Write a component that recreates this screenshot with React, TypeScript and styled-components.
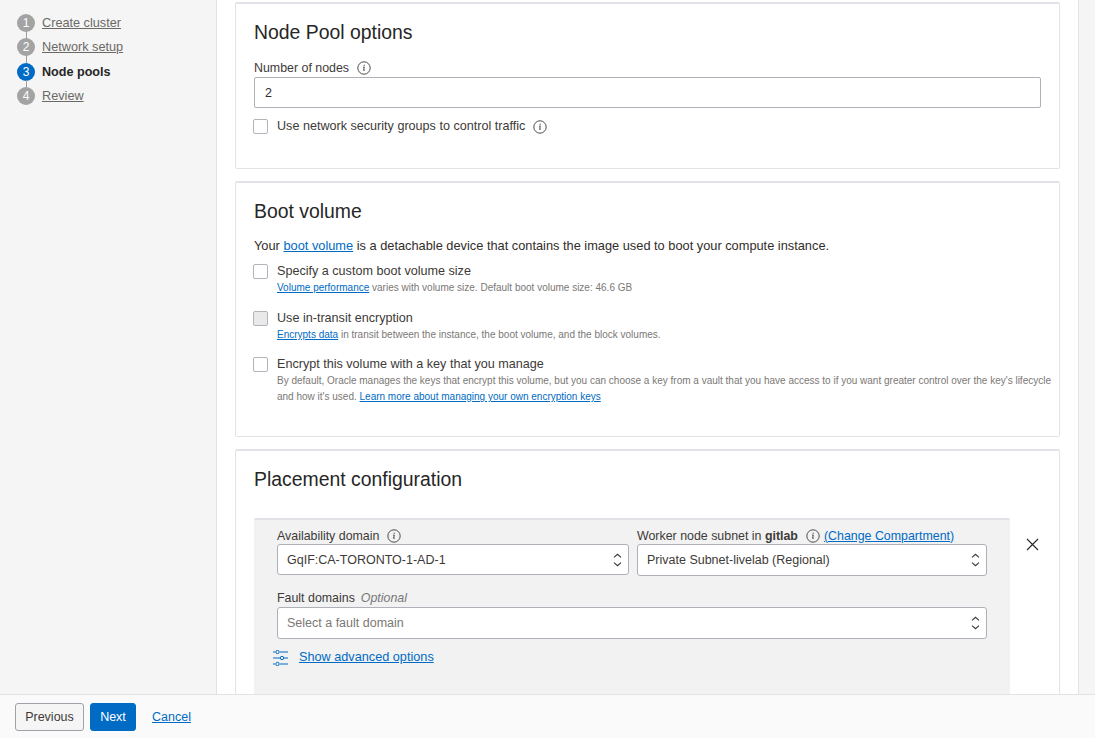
import React from 'react';
import styled, { createGlobalStyle } from 'styled-components';

const GlobalStyle = createGlobalStyle`
  html, body {
    margin: 0;
    height: 100%;
    overflow: hidden;
    font-family: "Liberation Sans", Arial, sans-serif;
    color: #312d2a;
  }
`;

const Page = styled.div`
  height: 738px;
  display: flex;
  flex-direction: column;
`;

const Body = styled.div`
  flex: 1;
  min-height: 0;
  display: flex;
  overflow: hidden;
  background: #f5f5f5;
`;

const Sidebar = styled.nav`
  width: 216px;
  flex-shrink: 0;
  padding: 11px 0 0 17px;
  box-sizing: border-box;
  display: flex;
  flex-direction: column;
`;

const Step = styled.div`
  height: 24.33px;
  display: flex;
  align-items: center;
  gap: 7px;
  position: relative;
  &:not(:last-child)::after {
    content: '';
    position: absolute;
    left: 8.5px;
    top: 20px;
    width: 1px;
    height: 8px;
    background: #9e9e9e;
  }
`;

const StepNumber = styled.span<{ $active?: boolean }>`
  width: 18px;
  height: 18px;
  border-radius: 50%;
  background: ${({ $active }) => ($active ? '#006bc4' : '#a3a3a3')};
  color: #fff;
  font-size: 12px;
  display: flex;
  align-items: center;
  justify-content: center;
  flex-shrink: 0;
`;

const StepLink = styled.a`
  font-size: 12.7px;
  color: #6b6966;
  text-decoration: underline;
`;

const StepCurrent = styled.span`
  font-size: 12.6px;
  font-weight: 700;
  color: #262626;
`;

const Main = styled.main`
  width: 863px;
  flex-shrink: 0;
  box-sizing: border-box;
  background: #fff;
  border-left: 1px solid #e3e3e6;
  border-right: 1px solid #e3e3e6;
  padding: 2px 18px 0 18px;
  overflow: hidden;
`;

const Card = styled.section<{ $height: number }>`
  height: ${({ $height }) => $height}px;
  box-sizing: border-box;
  margin-bottom: 12px;
  padding: 0 18px;
  background: #fff;
  border: 1px solid #e3e3e3;
  border-top: 2px solid #e2e2e8;
  border-radius: 2px;
`;

const CardTitle = styled.h2`
  margin: 0;
  padding: 16px 0 1px;
  font-size: 19.4px;
  line-height: 24px;
  font-weight: 400;
  color: #262626;
`;

const FieldLabel = styled.div`
  display: flex;
  align-items: center;
  height: 17px;
  font-size: 12.4px;
  color: #3d3a37;
  white-space: nowrap;
`;

const NodesLabel = styled(FieldLabel)`
  margin-top: 14px;
  margin-bottom: 1px;
`;

const InfoWrap = styled.span`
  display: inline-flex;
  margin-left: 8px;
`;

const TextInput = styled.div`
  height: 31px;
  width: 787px;
  box-sizing: border-box;
  border: 1px solid #aeb1b8;
  border-radius: 2px;
  padding-left: 10px;
  display: flex;
  align-items: center;
  font-size: 12.5px;
  background: #fff;
  color: #312d2a;
`;

const CheckRow = styled.div<{ $top: number }>`
  margin-top: ${({ $top }) => $top}px;
  margin-left: -1px;
  display: flex;
  align-items: flex-start;
  gap: 9px;
`;

const CheckBox = styled.span<{ $disabled?: boolean }>`
  width: 15px;
  height: 15px;
  box-sizing: border-box;
  flex-shrink: 0;
  border: 1px solid #b2b4bb;
  border-radius: 2px;
  background: ${({ $disabled }) => ($disabled ? '#e9e9e9' : '#fff')};
`;

const CheckText = styled.div`
  min-width: 0;
`;

const CheckLabel = styled.div`
  display: flex;
  align-items: center;
  font-size: 12.6px;
  line-height: 15px;
  color: #3d3a37;
`;

const Hint = styled.div`
  font-size: 10px;
  line-height: 16px;
  margin-top: 1px;
  color: #7b7875;
  white-space: nowrap;
`;

const Intro = styled.p`
  margin: 13px 0 0;
  font-size: 12.8px;
  line-height: 18px;
  color: #312d2a;
`;

const Link = styled.a`
  color: #006bc4;
  text-decoration: underline;
`;

const CompartmentLink = styled(Link)`
  margin-left: 4px;
`;

const PlacementRow = styled.div`
  margin-top: 26px;
  display: flex;
  align-items: flex-start;
`;

const Region = styled.div`
  width: 756px;
  height: 176px;
  flex-shrink: 0;
  box-sizing: border-box;
  background: #f2f2f3;
  border-top: 2px solid #e2e2e6;
  border-radius: 2px 2px 0 0;
  padding: 7px 23px 0;
`;

const FieldGrid = styled.div`
  display: grid;
  grid-template-columns: 352px 350px;
  column-gap: 8px;
`;

const SelectBox = styled.div<{ $height?: number }>`
  height: ${({ $height }) => $height ?? 31}px;
  box-sizing: border-box;
  background: #fff;
  border: 1px solid #aeb1b8;
  border-radius: 3px;
  padding: 0 6px 0 9px;
  display: flex;
  align-items: center;
  justify-content: space-between;
  font-size: 12.5px;
  color: #3d3a37;
`;

const Placeholder = styled.span`
  color: #7b7875;
`;

const FaultLabel = styled(FieldLabel)`
  margin-top: 13px;
  margin-bottom: 1px;
`;

const Optional = styled.em`
  margin-left: 6px;
  color: #777;
`;

const FaultSelect = styled(SelectBox)`
  width: 710px;
`;

const AdvancedRow = styled.div`
  margin: 10px 0 0 -4px;
  display: flex;
  align-items: center;
  gap: 10px;
  font-size: 12.7px;
  line-height: 17px;
`;

const CloseButton = styled.span`
  margin: 20px 0 0 16px;
  display: flex;
`;

const Rail = styled.div`
  flex: 1;
  background: #f5f5f5;
`;

const Footer = styled.footer`
  height: 44px;
  flex-shrink: 0;
  box-sizing: border-box;
  border-top: 1px solid #e3e3e3;
  background: #fafafa;
  padding-left: 15px;
  display: flex;
  align-items: center;
`;

const Button = styled.button<{ $primary?: boolean }>`
  height: 28px;
  box-sizing: border-box;
  margin: 0 6px 0 0;
  font: inherit;
  font-size: 12.5px;
  border-radius: 3px;
  padding: 0;
  width: ${({ $primary }) => ($primary ? '46px' : '69px')};
  color: ${({ $primary }) => ($primary ? '#fff' : '#3d3a37')};
  background: ${({ $primary }) => ($primary ? '#006bc4' : '#f5f5f5')};
  border: 1px solid ${({ $primary }) => ($primary ? '#006bc4' : '#9ea1a8')};
`;

const CancelLink = styled(Link)`
  margin-left: 10px;
  font-size: 12.5px;
`;

const InfoIcon = () => (
  <svg width="14" height="14" viewBox="0 0 14 14" fill="none" stroke="#3d3a37">
    <circle cx="7" cy="7" r="6.2" strokeWidth="0.9" />
    <path d="M6.1 6.2 7.3 6 6.6 9.4 7.8 9.1" strokeWidth="0.9" />
    <path d="M7.2 3.7v1.1" strokeWidth="1.1" />
  </svg>
);

const UpDownIcon = () => (
  <svg width="9" height="14" viewBox="0 0 9 14" fill="none" stroke="#3d3a37" strokeWidth="1.2">
    <path d="M1 4.4 4.5 1.4 8 4.4" />
    <path d="M1 9.6 4.5 12.6 8 9.6" />
  </svg>
);

const SlidersIcon = () => (
  <svg width="16" height="16" viewBox="0 0 16 16" fill="none" stroke="#006bc4" strokeWidth="1">
    <path d="M0 2h2M7 2h8M0 8h7M11 8h4M0 14h2M7 14h8" />
    <circle cx="4.5" cy="2" r="1.7" />
    <circle cx="9" cy="8" r="1.7" />
    <circle cx="4.5" cy="14" r="1.7" />
  </svg>
);

const CloseIcon = () => (
  <svg width="13" height="13" viewBox="0 0 13 13" fill="none" stroke="#262626" strokeWidth="1.1">
    <path d="M1 1l11 11M12 1 1 12" />
  </svg>
);

const App: React.FC = () => (
  <Page>
    <GlobalStyle />
    <Body>
      <Sidebar>
        <Step>
          <StepNumber>1</StepNumber>
          <StepLink>Create cluster</StepLink>
        </Step>
        <Step>
          <StepNumber>2</StepNumber>
          <StepLink>Network setup</StepLink>
        </Step>
        <Step>
          <StepNumber $active>3</StepNumber>
          <StepCurrent>Node pools</StepCurrent>
        </Step>
        <Step>
          <StepNumber>4</StepNumber>
          <StepLink>Review</StepLink>
        </Step>
      </Sidebar>

      <Main>
        <Card $height={167}>
          <CardTitle>Node Pool options</CardTitle>
          <NodesLabel>
            Number of nodes
            <InfoWrap><InfoIcon /></InfoWrap>
          </NodesLabel>
          <TextInput>2</TextInput>
          <CheckRow $top={11}>
            <CheckBox />
            <CheckLabel>
              Use network security groups to control traffic
              <InfoWrap><InfoIcon /></InfoWrap>
            </CheckLabel>
          </CheckRow>
        </Card>

        <Card $height={256}>
          <CardTitle>Boot volume</CardTitle>
          <Intro>
            Your <Link>boot volume</Link> is a detachable device that contains the image used to boot your compute instance.
          </Intro>
          <CheckRow $top={9}>
            <CheckBox />
            <CheckText>
              <CheckLabel>Specify a custom boot volume size</CheckLabel>
              <Hint><Link>Volume performance</Link> varies with volume size. Default boot volume size: 46.6 GB</Hint>
            </CheckText>
          </CheckRow>
          <CheckRow $top={15}>
            <CheckBox $disabled />
            <CheckText>
              <CheckLabel>Use in-transit encryption</CheckLabel>
              <Hint><Link>Encrypts data</Link> in transit between the instance, the boot volume, and the block volumes.</Hint>
            </CheckText>
          </CheckRow>
          <CheckRow $top={14}>
            <CheckBox />
            <CheckText>
              <CheckLabel>Encrypt this volume with a key that you manage</CheckLabel>
              <Hint>
                By default, Oracle manages the keys that encrypt this volume, but you can choose a key from a vault that you have access to if you want greater control over the key's lifecycle
                <br />
                and how it's used. <Link>Learn more about managing your own encryption keys</Link>
              </Hint>
            </CheckText>
          </CheckRow>
        </Card>

        <Card $height={260}>
          <CardTitle>Placement configuration</CardTitle>
          <PlacementRow>
            <Region>
              <FieldGrid>
                <div>
                  <FieldLabel>
                    Availability domain
                    <InfoWrap><InfoIcon /></InfoWrap>
                  </FieldLabel>
                  <SelectBox>
                    GqIF:CA-TORONTO-1-AD-1
                    <UpDownIcon />
                  </SelectBox>
                </div>
                <div>
                  <FieldLabel>
                    <span>Worker node subnet in <b>gitlab</b></span>
                    <InfoWrap><InfoIcon /></InfoWrap>
                    <CompartmentLink>(Change Compartment)</CompartmentLink>
                  </FieldLabel>
                  <SelectBox $height={32}>
                    Private Subnet-livelab (Regional)
                    <UpDownIcon />
                  </SelectBox>
                </div>
              </FieldGrid>
              <FaultLabel>
                Fault domains
                <Optional>Optional</Optional>
              </FaultLabel>
              <FaultSelect $height={32}>
                <Placeholder>Select a fault domain</Placeholder>
                <UpDownIcon />
              </FaultSelect>
              <AdvancedRow>
                <SlidersIcon />
                <Link>Show advanced options</Link>
              </AdvancedRow>
            </Region>
            <CloseButton><CloseIcon /></CloseButton>
          </PlacementRow>
        </Card>
      </Main>
      <Rail />
    </Body>
    <Footer>
      <Button>Previous</Button>
      <Button $primary>Next</Button>
      <CancelLink>Cancel</CancelLink>
    </Footer>
  </Page>
);

export default App;
